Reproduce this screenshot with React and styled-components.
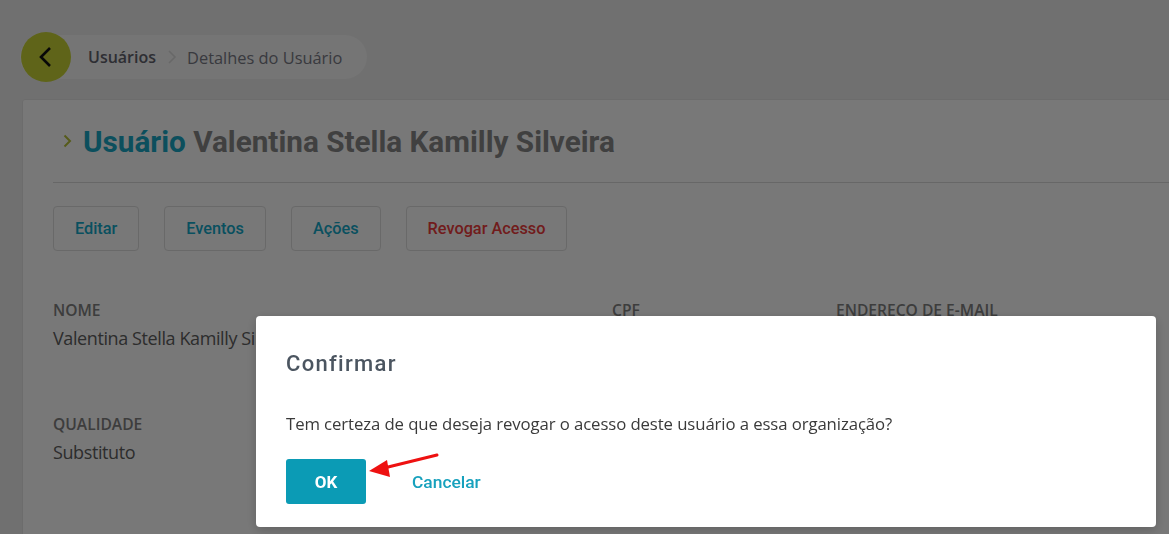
import React from "react";
import styled, { createGlobalStyle } from "styled-components";

const Global = createGlobalStyle`
  html, body { margin: 0; padding: 0; }
  body {
    background: #eeeeee;
    overflow: hidden;
    width: 1169px;
    height: 534px;
    font-family: "Open Sans", "Noto Sans", sans-serif;
  }
`;

const Page = styled.div`
  width: 1300px;
  padding: 35px 0 0 20px;
  box-sizing: border-box;
`;

const Crumbs = styled.nav`
  display: inline-flex;
  align-items: center;
  height: 44px;
  padding-right: 25px;
  border-radius: 22px;
  background: #f8f8f8;
`;

const BackButton = styled.button`
  width: 50px;
  height: 50px;
  margin: -3px 17px -3px 1px;
  border: none;
  border-radius: 50%;
  background: #c9d536;
  display: flex;
  align-items: center;
  justify-content: center;
  padding: 0;
`;

const CrumbLink = styled.span`
  font-size: ${(p) => (p.$strong ? "16px" : "16.4px")};
  font-weight: ${(p) => (p.$strong ? 600 : 400)};
  color: ${(p) => (p.$strong ? "#62636e" : "#7a7b86")};
`;

const CrumbSep = styled.span`
  margin: 0 10px 0 11px;
  display: flex;
`;

const Card = styled.section`
  margin: 20px 0 0 2px;
  background: #ffffff;
  border: 1px solid #e6e6e6;
  border-radius: 3px;
  padding: 20px 0 0 30px;
  height: 480px;
`;

const Title = styled.h1`
  margin: 0;
  display: flex;
  align-items: center;
  gap: 11px;
  padding-left: 10px;
  height: 42px;
  font-family: Roboto, "Noto Sans", sans-serif;
  font-size: 29.7px;
  font-weight: 700;
  color: #888888;
`;

const Accent = styled.span`
  color: #1aa8c6;
`;

const Divider = styled.hr`
  border: none;
  border-top: 1px solid #dcdcdc;
  margin: 20px 0 23px;
`;

const Actions = styled.div`
  display: flex;
  gap: 25px;
`;

const ActionButton = styled.button`
  height: 45px;
  padding: 0 21px;
  background: #ffffff;
  border: 1px solid #e0e0e0;
  border-radius: 4px;
  font-family: Roboto, "Noto Sans", sans-serif;
  font-size: 16.3px;
  font-weight: 500;
  color: ${(p) => (p.$danger ? "#f03c3c" : "#14aacb")};
`;

const Fields = styled.div`
  display: grid;
  grid-template-columns: 559px 224px 1fr;
  row-gap: 64px;
  margin-top: 49px;
`;

const Field = styled.div`
  display: flex;
  flex-direction: column;
  gap: 6px;
`;

const Label = styled.span`
  font-size: 15.6px;
  font-weight: 600;
  text-transform: uppercase;
  color: #828282;
  line-height: 20px;
`;

const Value = styled.span`
  font-size: 18px;
  color: #606060;
  line-height: 24px;
  letter-spacing: -0.4px;
`;

const Backdrop = styled.div`
  position: fixed;
  inset: 0;
  background: rgba(0, 0, 0, 0.53);
`;

const Dialog = styled.div`
  position: fixed;
  left: 256px;
  top: 316px;
  width: 900px;
  height: 211px;
  box-sizing: border-box;
  background: #ffffff;
  border-radius: 4px;
  box-shadow: 0 3px 12px rgba(0, 0, 0, 0.2);
  padding: 33px 30px 0;
`;

const DialogTitle = styled.h2`
  margin: 0;
  font-family: Roboto, "Noto Sans", sans-serif;
  font-size: 22px;
  font-weight: 500;
  letter-spacing: 1.3px;
  color: #4b5560;
  line-height: 30px;
`;

const DialogText = styled.p`
  margin: 33px 0 0;
  font-size: 16.75px;
  line-height: 24px;
  color: #3a3a3a;
  letter-spacing: -0.1px;
`;

const DialogActions = styled.div`
  display: flex;
  align-items: center;
  gap: 46px;
  margin-top: 23px;
`;

const PrimaryButton = styled.button`
  width: 80px;
  height: 45px;
  border: none;
  border-radius: 3px;
  background: #0b9bb5;
  color: #ffffff;
  font-family: Roboto, "Noto Sans", sans-serif;
  font-size: 17px;
  font-weight: 700;
`;

const LinkButton = styled.button`
  border: none;
  background: none;
  padding: 0;
  font-family: Roboto, "Noto Sans", sans-serif;
  font-size: 17.4px;
  font-weight: 500;
  color: #17a1bd;
`;

const Arrow = styled.svg`
  position: fixed;
  left: 360px;
  top: 450px;
`;

export default function App() {
  return (
    <>
      <Global />
      <Page>
        <Crumbs>
          <BackButton aria-label="Voltar">
            <svg width="22" height="22" viewBox="0 0 22 22">
              <path d="M15 2 L6 11 L15 20" fill="none" stroke="#111" strokeWidth="2.6" />
            </svg>
          </BackButton>
          <CrumbLink $strong>Usuários</CrumbLink>
          <CrumbSep>
            <svg width="10" height="16" viewBox="0 0 10 16">
              <path d="M2 2 L8 8 L2 14" fill="none" stroke="#dddddd" strokeWidth="1.6" />
            </svg>
          </CrumbSep>
          <CrumbLink>Detalhes do Usuário</CrumbLink>
        </Crumbs>
        <Card>
          <Title>
            <svg width="9" height="14" viewBox="0 0 9 14">
              <path d="M1.5 1.5 L7 7 L1.5 12.5" fill="none" stroke="#b8c23a" strokeWidth="2" />
            </svg>
            <span>
              <Accent>Usuário</Accent> Valentina Stella Kamilly Silveira
            </span>
          </Title>
          <Divider />
          <Actions>
            <ActionButton>Editar</ActionButton>
            <ActionButton>Eventos</ActionButton>
            <ActionButton>Ações</ActionButton>
            <ActionButton $danger>Revogar Acesso</ActionButton>
          </Actions>
          <Fields>
            <Field>
              <Label>Nome</Label>
              <Value>Valentina Stella Kamilly Silveira</Value>
            </Field>
            <Field>
              <Label>CPF</Label>
              <Value>123.456.789-00</Value>
            </Field>
            <Field>
              <Label>Endereço de e-mail</Label>
              <Value>valentina.silveira@email.com</Value>
            </Field>
            <Field>
              <Label>Qualidade</Label>
              <Value>Substituto</Value>
            </Field>
          </Fields>
        </Card>
      </Page>
      <Backdrop />
      <Dialog role="dialog">
        <DialogTitle>Confirmar</DialogTitle>
        <DialogText>
          Tem certeza de que deseja revogar o acesso deste usuário a essa organização?
        </DialogText>
        <DialogActions>
          <PrimaryButton>OK</PrimaryButton>
          <LinkButton>Cancelar</LinkButton>
        </DialogActions>
      </Dialog>
      <Arrow width="84" height="34" viewBox="0 0 84 34">
        <line x1="77" y1="5" x2="24" y2="18" stroke="#ee1111" strokeWidth="3" strokeLinecap="round" />
        <polygon points="9,21 27,10 30,27" fill="#ee1111" />
      </Arrow>
    </>
  );
}
